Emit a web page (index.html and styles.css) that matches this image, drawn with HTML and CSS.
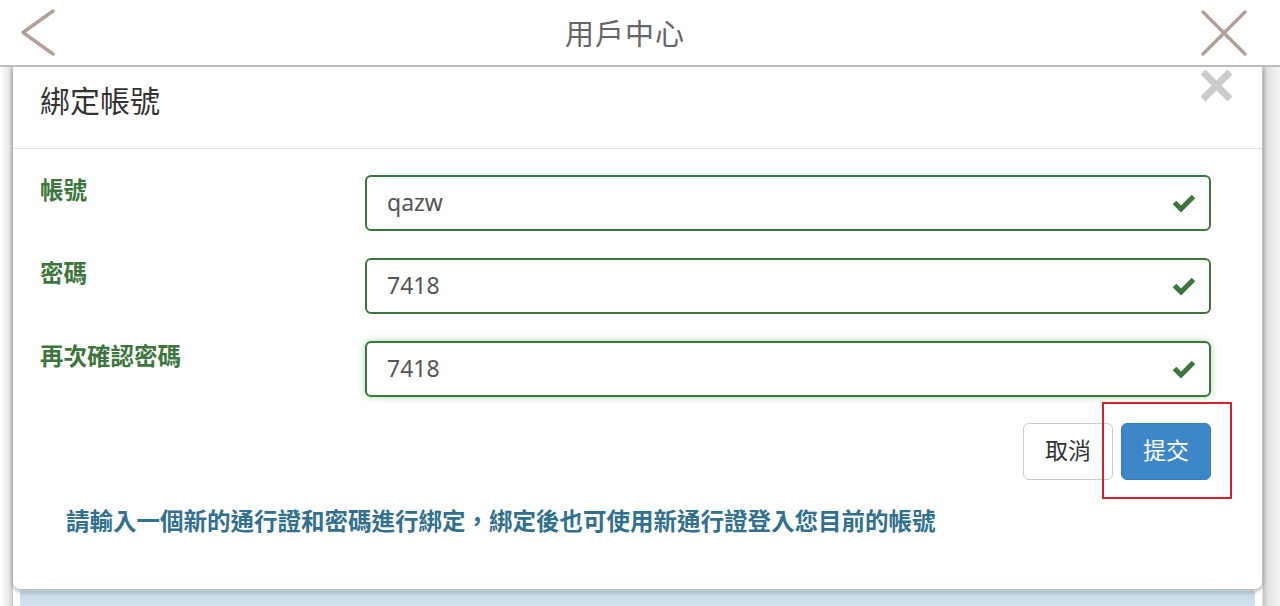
FILE: index.html
```html
<!DOCTYPE html>
<html lang="zh-Hant">
<head>
  <meta charset="UTF-8">
  <meta name="viewport" content="width=device-width, initial-scale=1.0">
  <title>用戶中心</title>
  <link rel="stylesheet" href="styles.css">
</head>
<body>
  <header class="topbar">
    <button class="nav-btn" aria-label="返回">
      <svg width="36" height="48" viewBox="0 0 36 48"><polyline points="33,2 3,23.5 33,45" fill="none" stroke="#b3a09b" stroke-width="3.4" stroke-linecap="round" stroke-linejoin="round"/></svg>
    </button>
    <h1 class="topbar-title">用戶中心</h1>
    <button class="nav-btn" aria-label="關閉">
      <svg width="48" height="48" viewBox="0 0 48 48"><path d="M3 3 L45 45 M45 3 L3 45" fill="none" stroke="#b3a09b" stroke-width="3.4" stroke-linecap="round"/></svg>
    </button>
  </header>

  <div class="stage">
    <div class="modal">
      <div class="modal-header">
        <h2 class="modal-title">綁定帳號</h2>
        <button class="modal-close" aria-label="關閉">
          <svg width="33" height="33" viewBox="0 0 33 33"><path d="M3 3 L30 30 M30 3 L3 30" fill="none" stroke="#cbcbcb" stroke-width="7"/></svg>
        </button>
      </div>

      <form class="modal-body">
        <div class="form-row">
          <label class="form-label" for="account">帳號</label>
          <div class="field">
            <input class="form-input" id="account" type="text" value="qazw">
            <svg class="field-ok" width="24" height="20" viewBox="0 0 24 20"><polyline points="2.5,9.5 9,16 21.5,3.5" fill="none" stroke="#3c763d" stroke-width="5"/></svg>
          </div>
        </div>
        <div class="form-row">
          <label class="form-label" for="password">密碼</label>
          <div class="field">
            <input class="form-input" id="password" type="text" value="7418">
            <svg class="field-ok" width="24" height="20" viewBox="0 0 24 20"><polyline points="2.5,9.5 9,16 21.5,3.5" fill="none" stroke="#3c763d" stroke-width="5"/></svg>
          </div>
        </div>
        <div class="form-row">
          <label class="form-label" for="password2">再次確認密碼</label>
          <div class="field">
            <input class="form-input is-focus" id="password2" type="text" value="7418">
            <svg class="field-ok" width="24" height="20" viewBox="0 0 24 20"><polyline points="2.5,9.5 9,16 21.5,3.5" fill="none" stroke="#3c763d" stroke-width="5"/></svg>
          </div>
        </div>

        <div class="form-actions">
          <button type="button" class="btn btn-default">取消</button>
          <button type="button" class="btn btn-primary">提交<span class="highlight"></span></button>
        </div>

        <p class="help-text">請輸入一個新的通行證和密碼進行綁定，綁定後也可使用新通行證登入您目前的帳號</p>
      </form>
    </div>
    <div class="backdrop-strip"></div>
  </div>
</body>
</html>
```

FILE: styles.css
```css
* { box-sizing: border-box; }
html, body { margin: 0; padding: 0; }
body { font-family: "Noto Sans CJK TC", "Noto Sans", sans-serif; background: #fff; width: 1280px; height: 606px; overflow: hidden; }

.topbar { height: 67px; display: flex; align-items: center; justify-content: space-between; padding: 0 32px 0 20px; border-bottom: 2px solid #bdbdbd; background: #fff; position: relative; z-index: 2; }
.topbar-title { margin: 0 6px 2px 0; font-size: 29px; font-weight: 400; color: #666; letter-spacing: 1px; }
.nav-btn { background: none; border: 0; padding: 0; display: flex; }

.stage { background: linear-gradient(to right, #fff 0, #ececec 8px, #c9c9c9 13px, #fff 13px, #fff 1262px, #c4c4c4 1263px, #e2e2e2 1268px, #f4f4f4 1280px); height: 539px; }

.modal { margin: 0 18px 0 13px; background: #fff; height: 522px; border-radius: 0 0 7px 7px; box-shadow: 0 2px 4px rgba(0,0,0,0.35); display: flex; flex-direction: column; }

.modal-header { height: 82px; display: flex; justify-content: space-between; align-items: flex-start; padding: 0 29px 0 27px; border-bottom: 1px solid #e5e5e5; }
.modal-title { margin: 10px 0 0; font-size: 30px; font-weight: 400; color: #333; }
.modal-close { background: none; border: 0; padding: 0; margin-top: 2px; display: flex; }

.modal-body { padding: 26px 51px 0 27px; margin: 0; flex: 1; }
.form-row { display: flex; align-items: flex-start; margin-bottom: 27px; }
.form-label { width: 325px; flex: none; font-size: 23.5px; font-weight: 700; color: #3c763d; line-height: 28px; }
.field { flex: 1; position: relative; }
.form-input { width: 100%; height: 56px; border: 2px solid #3c763d; border-radius: 6px; padding: 0 20px 3px; font-family: "Noto Sans", sans-serif; font-size: 23px; color: #555; background: #fff; outline: none; }
.form-input.is-focus { box-shadow: 0 0 7px rgba(103,177,104,0.55); }
.field-ok { position: absolute; right: 15px; top: 18px; }

.form-actions { display: flex; justify-content: flex-end; gap: 8px; margin-top: -1px; }
.btn { width: 90px; height: 57px; border-radius: 6px; font-family: "Noto Sans CJK TC", sans-serif; font-size: 23px; padding: 0 0 5px; }
.btn-default { background: #fff; border: 1px solid #ccc; color: #333; }
.btn-primary { background: #3d87c9; border: 1px solid #357ebd; color: #fff; position: relative; }
.highlight { position: absolute; left: -20px; top: -22px; width: 130px; height: 97px; border: 2px solid #d6202c; }

.help-text { margin: 25px 0 0 26px; font-size: 23.5px; font-weight: 700; color: #31708f; line-height: 30px; }

.backdrop-strip { margin: 2px 25px 0 20px; height: 16px; background: linear-gradient(to bottom, #a9bfca 0, #cadde7 5px, #d3e5ee 16px); }
```
